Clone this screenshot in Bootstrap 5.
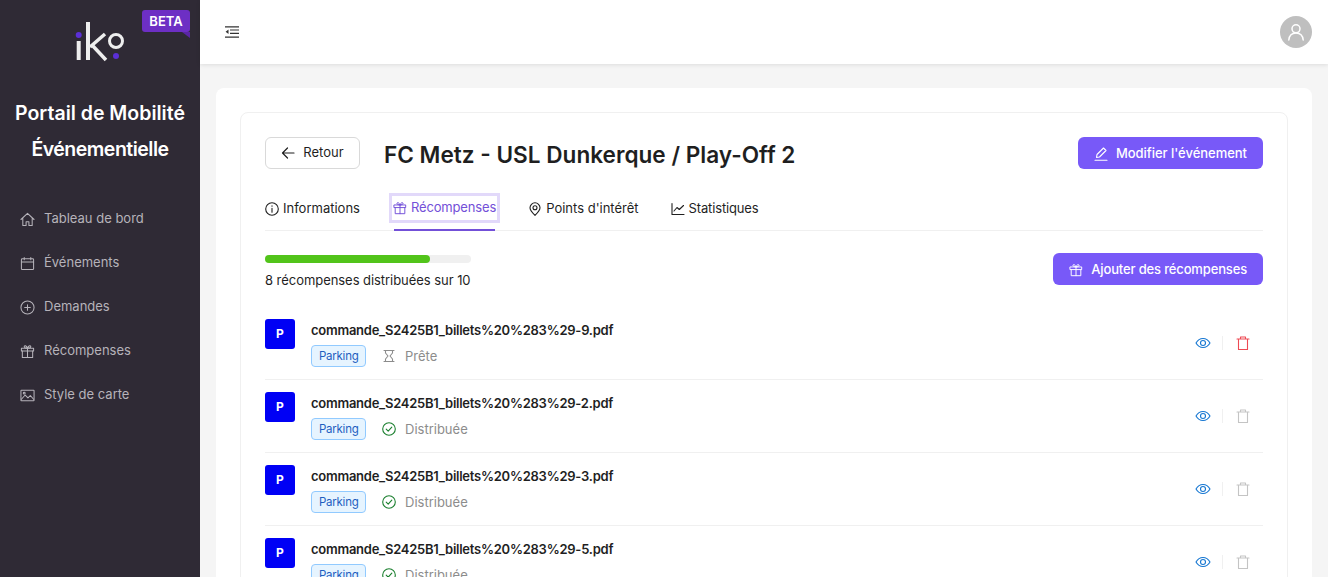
<!DOCTYPE html>
<html lang="fr">
<head>
<meta charset="utf-8">
<title>Récompenses</title>
<link href="https://cdn.jsdelivr.net/npm/bootstrap@5.3.0/dist/css/bootstrap.min.css" rel="stylesheet">
<style>
html,body{height:577px;overflow:hidden}
body{font-family:Inter,"Liberation Sans",sans-serif;font-size:13px;color:#1f1f1f;background:#f5f5f5}
svg{display:block;flex:none}
.ico{fill:none;stroke:currentColor;stroke-width:1.1;stroke-linecap:round;stroke-linejoin:round}
.side{width:200px;height:577px;background:#2f2a35;flex:none}
.logo-zone{height:73px;position:relative}
.beta{position:absolute;left:142px;top:10px;width:48px;height:22px;background:#6d2fc4;color:#fff;border-radius:3px;font-weight:600;font-size:13px;line-height:22px;text-align:center}
.beta::after{content:"";position:absolute;right:0;bottom:-6px;border-top:6px solid #5a25a5;border-left:8px solid transparent}
.logo-word{position:absolute;left:74px;top:20px}
.portal{color:#fff;font-size:19.5px;font-weight:600;line-height:36px;text-align:center;margin-top:22px;margin-bottom:30px}
.portal-second{letter-spacing:-.5px}
.side-link{display:flex;align-items:center;gap:9px;height:44px;padding-left:20px;color:#b6b3ba;text-decoration:none;font-size:13px}
.main-col{flex:1;min-width:0}
.topbar{height:64px;background:#fff;box-shadow:0 1px 4px rgba(0,0,0,.1);padding:0 16px 0 25px;position:relative}
.avatar{width:32px;height:32px;border-radius:50%;background:#bfbfbf;color:#fff}
.outer-panel{background:#fff;border-radius:8px;margin:24px 16px 0;padding:24px;height:600px}
.inner-panel{border:1px solid #f0f0f0;border-radius:8px;padding:24px;height:600px}
.back-btn{width:95px;height:32px;border:1px solid #d9d9d9;border-radius:6px;background:#fff;color:#1f1f1f;font-size:13px;gap:8px;padding:0}
.ev-title{font-size:22.6px;font-weight:600;margin:2px 0 0 24px;color:#1f1f1f;line-height:32px}
.violet-btn{height:32px;background:#7859f8;color:#fff;border:0;border-radius:6px;font-size:13px;font-weight:500;gap:8px;padding:1px 16px 0;letter-spacing:-.03px}
.violet-btn:hover{background:#7859f8;color:#fff}
.tab-bar{border-bottom:1px solid #f0f0f0;height:46px;margin-top:14px;gap:32px}
.tab-item{position:relative;height:46px;display:flex;align-items:center;gap:4px;color:#1f1f1f;text-decoration:none;font-size:13px;margin-top:1px}
.tab-on{color:#7350d8;outline:3px solid #e2d9fa;height:24px;margin:11px -1px 0 0;padding:0 1px;align-self:flex-start;letter-spacing:-.15px}
.tab-on::after{content:"";position:absolute;left:2px;right:2px;bottom:-11px;height:2px;background:#7350d8}
.tight{letter-spacing:-.15px}
.gauge{width:206px;height:8px;background:#f0f0f0;border-radius:4px;margin-top:2px}
.gauge-fill{height:8px;background:#52c41a;border-radius:4px}
.gauge-text{font-size:13px;line-height:20px;margin-top:7px;letter-spacing:-.05px}
.file-row{height:73px;border-bottom:1px solid #f0f0f0;padding-top:12px}
.p-tile{width:30px;height:30px;background:#0000f5;color:#fff;border-radius:3px;font-weight:700;font-size:12px;display:flex;align-items:center;justify-content:center;margin-right:16px}
.file-name{font-weight:600;font-size:13px;line-height:20px;margin-top:1px;letter-spacing:-.25px}
.tag-line{margin-top:5px}
.tag-p{display:inline-block;border:1px solid #91caff;background:#e6f4ff;color:#1f5fbf;border-radius:4px;font-size:11.5px;letter-spacing:-.25px;line-height:21px;padding:0 6.500px 0 7px;height:22px}
.state{color:#8c8c8c;gap:9px;margin-left:16px;font-size:13px;line-height:22px}
.acts{margin-right:12px;margin-bottom:13px}
.sep{width:1px;height:14px;background:#f0f0f0;margin:0 12px 0 11px}
</style>
</head>
<body>
<div class="d-flex">
<aside class="side">
  <div class="logo-zone">
    <svg class="logo-word" width="52" height="42" viewBox="0 0 52 42" fill="none"><circle cx="4.700" cy="15" r="3" fill="#5b2fd6"/><path d="M4.700 21v19" stroke="#eee" stroke-width="4"/><path d="M14 2v38" stroke="#eee" stroke-width="4"/><path d="M16 27 31 14M18 25l14 15" stroke="#eee" stroke-width="3.500"/><circle cx="42" cy="21" r="6.500" stroke="#eee" stroke-width="3"/><circle cx="42" cy="36" r="3" fill="#5b2fd6"/></svg>
    <div class="beta">BETA</div>
  </div>
  <div class="portal">Portail de Mobilité<br><span class="portal-second">Événementielle</span></div>
  <nav>
    <a class="side-link" href="#"><svg class="ico" width="15" height="15" viewBox="0 0 16 16"><path d="M1 8 8 1.500 15 8M3 7v7.500h3.500v-4h3v4H13V7"/></svg>Tableau de bord</a>
    <a class="side-link" href="#"><svg class="ico" width="15" height="15" viewBox="0 0 16 16"><rect x="1.500" y="3" width="13" height="11.500" rx="1"/><path d="M1.500 6.500h13M4.500 1.500V4M11.500 1.500V4"/></svg>Événements</a>
    <a class="side-link" href="#"><svg class="ico" width="15" height="15" viewBox="0 0 16 16"><circle cx="8" cy="8" r="7"/><path d="M8 5v6M5 8h6"/></svg>Demandes</a>
    <a class="side-link" href="#"><svg class="ico" width="15" height="15" viewBox="0 0 16 16"><rect x="1.500" y="4.500" width="13" height="3"/><path d="M2.500 7.500v7h11v-7M8 4.500v10M8 4.500C6 4.500 4.500 3.800 4.500 2.700S6.700 1 8 4.500C9.300 1 11.500 1.600 11.500 2.700S10 4.500 8 4.500"/></svg>Récompenses</a>
    <a class="side-link" href="#"><svg class="ico" width="15" height="15" viewBox="0 0 16 16"><rect x="1" y="2.500" width="14" height="11" rx=".5"/><path d="m1.500 12 4-4.500 3 3 2.500-2.500 3.500 4"/><circle cx="4.500" cy="5.500" r="1"/></svg>Style de carte</a>
  </nav>
</aside>
<div class="main-col">
  <header class="topbar d-flex align-items-center justify-content-between">
    <svg width="14" height="14" viewBox="0 0 14 14" fill="#333"><path d="M0 1.200h14v1.200H0zM5 4.400h9v1.200H5zM5 7.800h9V9H5zM0 11.600h14v1.200H0zM3.500 4.500v4.500L.6 6.800z"/></svg>
    <div class="avatar d-flex align-items-center justify-content-center"><svg width="20" height="20" viewBox="0 0 20 20" fill="none" stroke="#fff" stroke-width="1.500"><circle cx="10" cy="6.800" r="4"/><path d="M2.800 18c.5-4.500 3.500-7 7.200-7s6.700 2.500 7.200 7" stroke-linecap="round"/></svg></div>
  </header>
  <div class="outer-panel"><div class="inner-panel">
    <div class="d-flex align-items-start">
      <button class="btn back-btn d-flex align-items-center justify-content-center"><svg class="ico" width="14" height="14" viewBox="0 0 14 14" style="stroke-width:1.200"><path d="M13 7H1.500M6.500 2 1.500 7l5 5"/></svg>Retour</button>
      <h1 class="ev-title">FC Metz - USL Dunkerque / Play-Off 2</h1>
      <button class="btn violet-btn ms-auto d-flex align-items-center"><svg class="ico" width="14" height="14" viewBox="0 0 14 14"><path d="M1 13.200h12M2.500 10.500l.5-3L9.500 1l2.500 2.500L5.500 10z"/></svg>Modifier l'événement</button>
    </div>
    <div class="tab-bar d-flex">
      <a class="tab-item" href="#"><svg class="ico" width="14" height="14" viewBox="0 0 14 14"><circle cx="7" cy="7" r="6.300"/><path d="M7 6.200v4M7 3.800v.4"/></svg>Informations</a>
      <a class="tab-item tab-on" href="#"><svg class="ico" width="14" height="14" viewBox="0 0 16 16"><rect x="1.500" y="4.500" width="13" height="3"/><path d="M2.500 7.500v7h11v-7M8 4.500v10M8 4.500C6 4.500 4.500 3.800 4.500 2.700S6.700 1 8 4.500C9.300 1 11.500 1.600 11.500 2.700S10 4.500 8 4.500"/></svg>Récompenses</a>
      <a class="tab-item" href="#"><svg class="ico" width="14" height="14" viewBox="0 0 14 14"><path d="M7 13.300C4 10.500 2 8.300 2 5.800a5 5 0 0 1 10 0c0 2.500-2 4.700-5 7.500z"/><circle cx="7" cy="5.800" r="2"/></svg>Points d'intérêt</a>
      <a class="tab-item tight" href="#"><svg class="ico" width="14" height="14" viewBox="0 0 14 14"><path d="M1 1.500V12.500h12M3 9l3-3.500 2.300 2L12.500 3.500"/></svg>Statistiques</a>
    </div>
    <div class="d-flex justify-content-between" style="margin-top:22px">
      <div><div class="gauge"><div class="gauge-fill" style="width:80%"></div></div><div class="gauge-text">8 récompenses distribuées sur 10</div></div>
      <button class="btn violet-btn d-flex align-items-center" style="letter-spacing:-.15px"><svg class="ico" width="14" height="14" viewBox="0 0 16 16"><rect x="1.500" y="4.500" width="13" height="3"/><path d="M2.500 7.500v7h11v-7M8 4.500v10M8 4.500C6 4.500 4.500 3.800 4.500 2.700S6.700 1 8 4.500C9.300 1 11.500 1.600 11.500 2.700S10 4.500 8 4.500"/></svg>Ajouter des récompenses</button>
    </div>
    <div style="margin-top:17px">
      <div class="file-row d-flex">
        <div class="p-tile">P</div>
        <div><div class="file-name">commande_S2425B1_billets%20%283%29-9.pdf</div>
          <div class="tag-line d-flex align-items-center"><span class="tag-p">Parking</span><span class="state d-flex align-items-center"><svg width="14" height="14" viewBox="0 0 14 14" class="ico"><path d="M2 1.500h10M2 12.500h10M3.500 1.500v2.500L6 7l-2.500 3v2.500M10.500 1.500v2.500L8 7l2.500 3v2.500"/></svg><span>Prête</span></span></div></div>
        <div class="acts ms-auto d-flex align-items-center"><svg class="ico" width="16" height="16" viewBox="0 0 16 16" style="color:#1677d2"><path d="M1 8c1.700-3 4-4.500 7-4.500S13.300 5 15 8c-1.700 3-4 4.500-7 4.500S2.700 11 1 8z"/><circle cx="8" cy="8" r="2.500"/></svg><span class="sep"></span><svg class="ico" width="16" height="16" viewBox="0 0 16 16" style="color:#ee4a54"><path d="M2 4h12M5.500 4V2h5v2M3.500 4v10.500h9V4"/></svg></div>
      </div>
      <div class="file-row d-flex">
        <div class="p-tile">P</div>
        <div><div class="file-name">commande_S2425B1_billets%20%283%29-2.pdf</div>
          <div class="tag-line d-flex align-items-center"><span class="tag-p">Parking</span><span class="state d-flex align-items-center"><svg width="14" height="14" viewBox="0 0 14 14" class="ico" style="color:#1a7f2e"><circle cx="7" cy="7" r="6.300"/><path d="m4.200 7.200 2 2 3.600-4"/></svg><span>Distribuée</span></span></div></div>
        <div class="acts ms-auto d-flex align-items-center"><svg class="ico" width="16" height="16" viewBox="0 0 16 16" style="color:#1677d2"><path d="M1 8c1.700-3 4-4.500 7-4.500S13.300 5 15 8c-1.700 3-4 4.500-7 4.500S2.700 11 1 8z"/><circle cx="8" cy="8" r="2.500"/></svg><span class="sep"></span><svg class="ico" width="16" height="16" viewBox="0 0 16 16" style="color:#c4c4c4"><path d="M2 4h12M5.500 4V2h5v2M3.500 4v10.500h9V4"/></svg></div>
      </div>
      <div class="file-row d-flex">
        <div class="p-tile">P</div>
        <div><div class="file-name">commande_S2425B1_billets%20%283%29-3.pdf</div>
          <div class="tag-line d-flex align-items-center"><span class="tag-p">Parking</span><span class="state d-flex align-items-center"><svg width="14" height="14" viewBox="0 0 14 14" class="ico" style="color:#1a7f2e"><circle cx="7" cy="7" r="6.300"/><path d="m4.200 7.200 2 2 3.600-4"/></svg><span>Distribuée</span></span></div></div>
        <div class="acts ms-auto d-flex align-items-center"><svg class="ico" width="16" height="16" viewBox="0 0 16 16" style="color:#1677d2"><path d="M1 8c1.700-3 4-4.500 7-4.500S13.300 5 15 8c-1.700 3-4 4.500-7 4.500S2.700 11 1 8z"/><circle cx="8" cy="8" r="2.500"/></svg><span class="sep"></span><svg class="ico" width="16" height="16" viewBox="0 0 16 16" style="color:#c4c4c4"><path d="M2 4h12M5.500 4V2h5v2M3.500 4v10.500h9V4"/></svg></div>
      </div>
      <div class="file-row d-flex">
        <div class="p-tile">P</div>
        <div><div class="file-name">commande_S2425B1_billets%20%283%29-5.pdf</div>
          <div class="tag-line d-flex align-items-center"><span class="tag-p">Parking</span><span class="state d-flex align-items-center"><svg width="14" height="14" viewBox="0 0 14 14" class="ico" style="color:#1a7f2e"><circle cx="7" cy="7" r="6.300"/><path d="m4.200 7.200 2 2 3.600-4"/></svg><span>Distribuée</span></span></div></div>
        <div class="acts ms-auto d-flex align-items-center"><svg class="ico" width="16" height="16" viewBox="0 0 16 16" style="color:#1677d2"><path d="M1 8c1.700-3 4-4.500 7-4.500S13.300 5 15 8c-1.700 3-4 4.500-7 4.500S2.700 11 1 8z"/><circle cx="8" cy="8" r="2.500"/></svg><span class="sep"></span><svg class="ico" width="16" height="16" viewBox="0 0 16 16" style="color:#c4c4c4"><path d="M2 4h12M5.500 4V2h5v2M3.500 4v10.500h9V4"/></svg></div>
      </div>
    </div>
  </div></div>
</div>
</div>
<script src="https://cdn.jsdelivr.net/npm/bootstrap@5.3.0/dist/js/bootstrap.bundle.min.js"></script>
</body>
</html>
